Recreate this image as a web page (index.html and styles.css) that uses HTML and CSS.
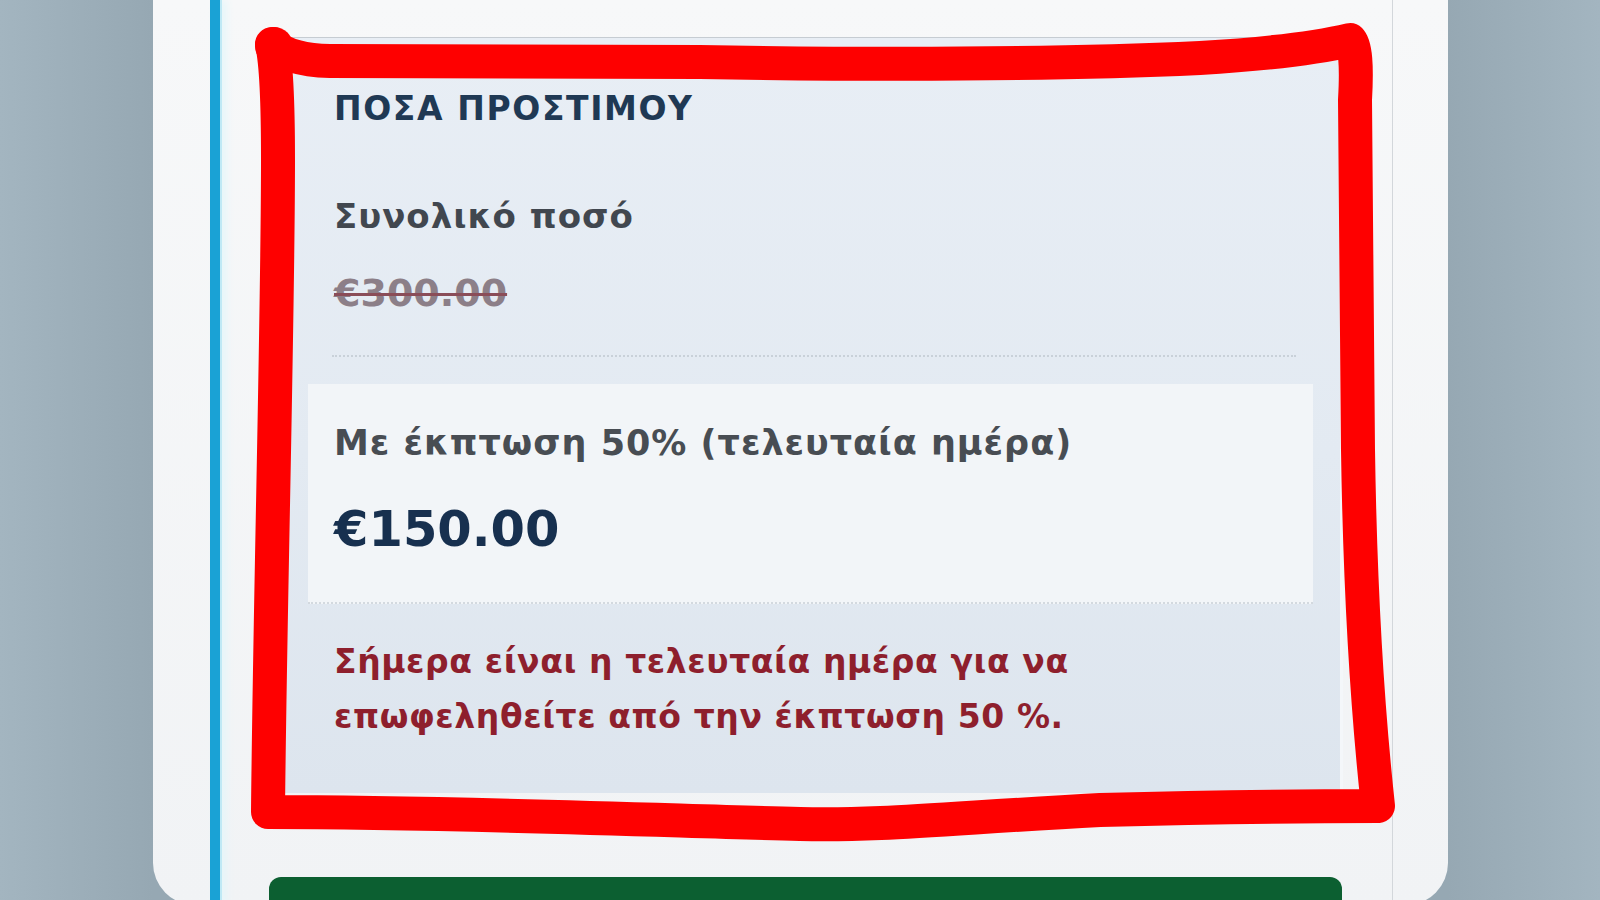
FILE: index.html
```html
<!DOCTYPE html>
<html lang="el">
<head>
<meta charset="utf-8">
<title>Ποσά προστίμου</title>
<link rel="stylesheet" href="styles.css">
</head>
<body>
<div class="stage">
  <div class="card">
    <div class="rail"></div>
    <div class="content">
      <section class="panel">
        <h2 class="panel-title">ΠΟΣΑ ΠΡΟΣΤΙΜΟΥ</h2>
        <div class="total">
          <div class="label">Συνολικό ποσό</div>
          <div class="old-price">€300.00</div>
        </div>
        <div class="dots"></div>
        <div class="discount">
          <div class="label label-discount">Με έκπτωση 50% (τελευταία ημέρα)</div>
          <div class="new-price">€150.00</div>
        </div>
        <p class="warning">Σήμερα είναι η τελευταία ημέρα για να<br>επωφεληθείτε από την έκπτωση 50 %.</p>
      </section>
      <div class="pay-btn"></div>
    </div>
  </div>
  <svg class="annotation" width="1600" height="900" viewBox="0 0 1600 900">
    <path d="M 272 44 Q 288 60 330 61 L 700 62 Q 1000 67 1200 58 Q 1300 52 1350 40 Q 1358 48 1355 100 L 1358 450 Q 1361 650 1378 806 Q 1250 806 1100 810 C 950 818 880 826 800 824 C 650 820 450 812 268 812 C 270 600 278 320 278 160 Q 278 70 272 44 Z" fill="none" stroke="#fe0000" stroke-width="34" stroke-linejoin="round" stroke-linecap="round"/>
    <circle cx="274" cy="46" r="19" fill="#fe0000"/>
  </svg>
</div>
</body>
</html>
```
FILE: styles.css
```css
* { box-sizing: border-box; }
html, body { margin: 0; padding: 0; }
body {
  width: 1600px;
  height: 900px;
  overflow: hidden;
  background: linear-gradient(90deg, #a3b5c0 0%, #96a8b3 9.5%, #96a8b3 90.5%, #a3b5c0 100%);
  font-family: "DejaVu Sans", Verdana, sans-serif;
}
.stage {
  position: relative;
  width: 1600px;
  height: 900px;
  padding-left: 153px;
}
.card {
  width: 1295px;
  height: 905px;
  background: linear-gradient(180deg, #f7f8f9 0%, #f1f3f5 100%);
  border-radius: 0 0 42px 42px;
  display: flex;
  padding-left: 57px;
}
.rail {
  width: 10px;
  flex: none;
  background: #1aa2d5;
  box-shadow: 2px 0 0 #bfe9f5, 6px 0 8px #e4f6fa;
}
.content {
  width: 1173px;
  flex: none;
  border-right: 1px solid #d3d7db;
  padding: 37px 49px 0 52px;
  display: flex;
  flex-direction: column;
}
.panel {
  flex: none;
  height: 756px;
  border-top: 1px solid #c6ccd2;
  background: linear-gradient(180deg, #e8eef5 0%, #e3eaf2 55%, #dde5ee 100%);
  box-shadow: inset -3px 0 0 #f4f7fa;
  padding: 51px 30px 0 36px;
}
.panel-title {
  margin: 0;
  padding-left: 26px;
  font-size: 33px;
  line-height: 1.2;
  font-weight: bold;
  letter-spacing: 1.6px;
  color: #1f3954;
}
.total { padding-left: 26px; }
.label {
  margin-top: 67px;
  font-size: 34px;
  line-height: 1.2;
  font-weight: bold;
  letter-spacing: 1px;
  color: #41474f;
}
.old-price {
  margin-top: 35px;
  font-size: 38px;
  line-height: 1.2;
  font-weight: bold;
  color: #8c7f88;
  text-decoration: line-through;
  text-decoration-color: #8a4d58;
  text-decoration-thickness: 3px;
}
.dots {
  margin: 38px 17px 0 24px;
  height: 2px;
  border-top: 2px dotted #c9d1d9;
}
.discount {
  margin-top: 27px;
  background: #f2f5f8;
  padding: 38px 0 43px 26px;
  border-bottom: 2px dotted #d3d9df;
}
.label-discount {
  margin-top: 0;
  font-size: 35px;
  letter-spacing: 1px;
  color: #484d53;
}
.new-price {
  margin-top: 36px;
  font-size: 49.5px;
  line-height: 1.2;
  font-weight: bold;
  color: #17304f;
}
.warning {
  margin: 30px 0 0 26px;
  font-size: 33px;
  line-height: 55px;
  font-weight: bold;
  letter-spacing: 0.6px;
  color: #8e1f2d;
}
.pay-btn {
  flex: none;
  margin-top: 84px;
  height: 60px;
  margin-left: -3px;
  width: 1073px;
  background: #0c5f31;
  border-radius: 12px 12px 0 0;
}
.annotation {
  position: absolute;
  left: 0;
  top: 0;
  pointer-events: none;
}
```
